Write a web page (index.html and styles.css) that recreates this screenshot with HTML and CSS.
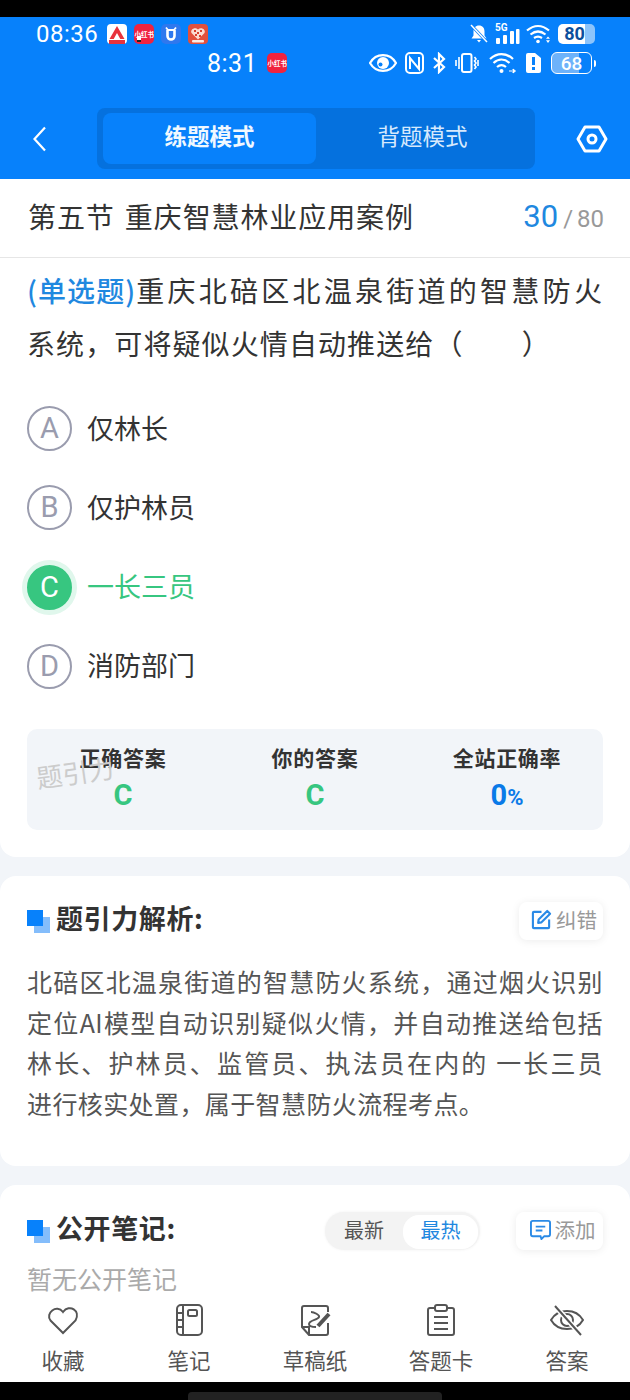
FILE: index.html
```html
<!DOCTYPE html>
<html lang="zh-CN">
<head>
<meta charset="utf-8">
<title>练题模式</title>
<link rel="stylesheet" href="styles.css">
</head>
<body>
<div class="page">
  <div class="black-top"></div>
  <header class="header">
    <div class="status-row row-one">
      <div class="status-left">
        <span class="time-one">08:36</span>
        <svg class="app" viewBox="0 0 20 20"><rect width="20" height="20" rx="4" fill="#fff"/><path d="M2.500 15 10 2l7.500 13h-4.200L10 9l-3.300 6z" fill="#e8323c"/><rect x="2" y="16" width="16" height="4" fill="#e8323c"/></svg>
        <span class="app red-app badge-app">小红书</span>
        <svg class="app" viewBox="0 0 20 20"><rect width="20" height="20" rx="5" fill="#2f78ee"/><path d="M6.500 6v6a3.500 3.500 0 0 0 7 0V6" fill="none" stroke="#fff" stroke-width="2.600"/><path d="M5 3.500 7 6h6l2-2.500" fill="none" stroke="#fff" stroke-width="1.800"/></svg>
        <svg class="app" viewBox="0 0 20 20"><rect width="20" height="20" rx="4" fill="#e2503c"/><path d="M10 15.500 3.500 9C1.800 5.500 7 2.500 10 5.500c3-3 8.200 0 6.500 3.500z" fill="#fbdcd2"/><path d="M6 6h2v2H6zM9 8h2v2H9zM12 6h2v2h-2zM7 10h2v2H7zM11 11h2v2h-2z" fill="#d9412f"/><rect x="4" y="16" width="12" height="2.500" rx="1" fill="#fbe9e2"/></svg>
      </div>
      <div class="status-right one-right">
        <svg class="ico-bell" viewBox="0 0 20 20"><path d="M10 1.500c3.500 0 5.500 2.500 5.500 6v4l2 3h-15l2-3v-4c0-3.500 2-6 5.500-6zM8 16h4l-2 2.500z" fill="#fff"/><path d="M2 1l16 17" stroke="#0781fb" stroke-width="3"/><path d="M2 1l16 17" stroke="#fff" stroke-width="1.500"/></svg>
        <svg class="ico-sig" viewBox="0 0 25 26"><text x="0" y="10" class="sig-text">5G</text><rect x="1" y="17" width="4" height="6" rx="1" fill="#fff"/><rect x="8" y="14" width="4" height="9" rx="1" fill="#fff"/><rect x="15" y="10" width="4" height="13" rx="1" fill="#fff"/><rect x="21" y="8" width="3.500" height="15" rx="1" fill="#fff"/></svg>
        <svg class="ico-wifi" viewBox="0 0 26 20"><path d="M1 6.500c7-6 15-6 22 0M4.500 10.500c5-4 10-4 15 0M8 14c3-2 5-2 8 0" fill="none" stroke="#fff" stroke-width="2.200"/><circle cx="12" cy="17.500" r="1.800" fill="#fff"/><path d="M22 12.500l2 2.200h-4zM22 19l2-2.800h-4z" fill="#fff"/></svg>
        <span class="batt-one"><span class="batt-one-num">80</span></span>
      </div>
    </div>
    <div class="status-row row-two">
      <div class="status-left left-two">
        <span class="time-two">8:31</span>
        <span class="app red-app">小红书</span>
      </div>
      <div class="status-right two-right">
        <svg class="ico-eye" viewBox="0 0 28 20"><path d="M1 10c6-10.500 20-10.500 26 0-6 10.500-20 10.500-26 0z" fill="none" stroke="#fff" stroke-width="2.200"/><circle cx="14" cy="10" r="6" fill="#fff"/><circle cx="11.500" cy="11.500" r="2" fill="#0781fb"/></svg>
        <svg class="ico-nfc" viewBox="0 0 19 22"><rect x="1" y="1" width="17" height="20" rx="4" fill="none" stroke="#fff" stroke-width="2"/><path d="M5 17V6l9 11V5" fill="none" stroke="#fff" stroke-width="2"/></svg>
        <svg class="ico-bt" viewBox="0 0 14 22"><path d="M2 6l10 9-5 5V2l5 5-10 9" fill="none" stroke="#fff" stroke-width="2.200"/></svg>
        <svg class="ico-vib" viewBox="0 0 25 22"><rect x="8" y="2" width="9.500" height="18" rx="2" fill="none" stroke="#fff" stroke-width="2"/><path d="M5 5v12M2 8v6M20.500 5l1.500 2-1.500 2 1.500 2-1.500 2 1.500 2-1.500 2M24 8v6" fill="none" stroke="#fff" stroke-width="1.600"/></svg>
        <svg class="ico-wifi2" viewBox="0 0 27 22"><path d="M1 7c7-6.500 16-6.500 23 0M4.500 11c5-4.500 11-4.500 16 0M8 15c3-2.500 6-2.500 9 0" fill="none" stroke="#fff" stroke-width="2.200"/><circle cx="12.500" cy="19" r="2" fill="#fff"/><path d="M20 19h3M24 17l2.500 2-2.500 2z" fill="#fff" stroke="#fff"/></svg>
        <svg class="ico-sim" viewBox="0 0 18 22"><path d="M4 1h7l6 5v13a2 2 0 0 1-2 2H4a2 2 0 0 1-2-2V3a2 2 0 0 1 2-2z" fill="#fff" transform="translate(-1)"/><rect x="7" y="5" width="3" height="8" fill="#0781fb"/><rect x="7" y="15" width="3" height="3" fill="#0781fb"/></svg>
        <span class="batt-two"><span class="batt-two-num">68</span></span>
        <span class="batt-tip"></span>
      </div>
    </div>
    <nav class="nav">
      <svg class="back" viewBox="0 0 13 26"><path d="M12 1.500 1.500 13 12 24.500" fill="none" stroke="#fff" stroke-width="2.200"/></svg>
      <div class="segments">
        <div class="segment active">练题模式</div>
        <div class="segment">背题模式</div>
      </div>
      <svg class="gear" viewBox="0 0 32 28"><path d="M9 2h14l7 12-7 12H9L2 14z" fill="none" stroke="#fff" stroke-width="3" stroke-linejoin="round"/><circle cx="16" cy="14" r="4" fill="none" stroke="#fff" stroke-width="3"/></svg>
    </nav>
  </header>

  <main class="main">
    <section class="card question-card">
      <div class="title-row">
        <h1 class="chapter">第五节 重庆智慧林业应用案例</h1>
        <div class="progress"><span class="progress-now">30</span><span class="progress-total">/ 80</span></div>
      </div>
      <p class="question"><span class="q-line"><span class="q-type">(单选题)</span>重庆北碚区北温泉街道的智慧防火</span><span class="q-line-two">系统，可将疑似火情自动推送给（&emsp;&emsp;）</span></p>
      <ul class="options">
        <li class="option"><span class="letter">A</span><span class="option-text">仅林长</span></li>
        <li class="option"><span class="letter">B</span><span class="option-text">仅护林员</span></li>
        <li class="option picked"><span class="letter">C</span><span class="option-text">一长三员</span></li>
        <li class="option"><span class="letter">D</span><span class="option-text">消防部门</span></li>
      </ul>
      <div class="stats">
        <span class="watermark">题引力</span>
        <div class="stat"><div class="stat-label">正确答案</div><div class="stat-value green">C</div></div>
        <div class="stat"><div class="stat-label">你的答案</div><div class="stat-value green">C</div></div>
        <div class="stat"><div class="stat-label">全站正确率</div><div class="stat-value blue">0<small class="pct">%</small></div></div>
      </div>
    </section>

    <section class="card analysis-card">
      <div class="section-head">
        <span class="squares"><i class="sq-back"></i><i class="sq-front"></i></span>
        <h2 class="section-title">题引力解析:</h2>
        <button class="mini-btn">
          <svg class="mini-ico" viewBox="0 0 22 22"><path d="M11 3H3a1 1 0 0 0-1 1v15a1 1 0 0 0 1 1h15a1 1 0 0 0 1-1v-8" fill="none" stroke="#2a8ae6" stroke-width="2.200"/><path d="M8 11 17 2l3 3-9 9-3.500.500z" fill="none" stroke="#2a8ae6" stroke-width="2.200" stroke-linejoin="round"/></svg>纠错
        </button>
      </div>
      <p class="analysis">北碚区北温泉街道的智慧防火系统，通过烟火识别定位AI模型自动识别疑似火情，并自动推送给包括林长、护林员、监管员、执法员在内的 一长三员<span class="analysis-end">进行核实处置，属于智慧防火流程考点。</span></p>
    </section>

    <section class="card notes-card">
      <div class="section-head">
        <span class="squares"><i class="sq-back"></i><i class="sq-front"></i></span>
        <h2 class="section-title">公开笔记:</h2>
        <div class="toggle"><span class="toggle-item">最新</span><span class="toggle-item on">最热</span></div>
        <button class="mini-btn wide">
          <svg class="mini-ico" viewBox="0 0 22 22"><path d="M3 2h16a2 2 0 0 1 2 2v12a2 2 0 0 1-2 2h-4l-3 3-1-3H3a2 2 0 0 1-2-2V4a2 2 0 0 1 2-2z" fill="none" stroke="#2a8ae6" stroke-width="2"/><path d="M6 8h10M6 12h7" stroke="#2a8ae6" stroke-width="2"/></svg>添加
        </button>
      </div>
      <p class="empty">暂无公开笔记</p>
    </section>
  </main>

  <footer class="tabs">
    <div class="tab">
      <svg class="tab-ico" viewBox="0 0 34 34"><path d="M17 30 4.500 17.500C-1 10.500 10.500 .500 17 9c6.500-8.500 18-1.500 12.500 8.500z" fill="none" stroke="#555" stroke-width="2"/></svg>
      <span>收藏</span>
    </div>
    <div class="tab">
      <svg class="tab-ico" viewBox="0 0 34 34"><rect x="5" y="2" width="25" height="30" rx="4" fill="none" stroke="#555" stroke-width="2"/><path d="M11 2v30M5 10h6M5 17h6M5 24h6" fill="none" stroke="#555" stroke-width="2"/><rect x="16" y="7" width="9" height="6" rx="1.500" fill="none" stroke="#555" stroke-width="2"/></svg>
      <span>笔记</span>
    </div>
    <div class="tab">
      <svg class="tab-ico" viewBox="0 0 34 34"><path d="M30 9V5a2 2 0 0 0-2-2H6a2 2 0 0 0-2 2v19l7 8h17a2 2 0 0 0 2-2V20" fill="none" stroke="#555" stroke-width="2"/><path d="M4 24h7v8" fill="none" stroke="#555" stroke-width="2"/><path d="M13 9c3 0 9 3 8 5-1 3-10 3-10 7 0 3 5 3 7 3" fill="none" stroke="#555" stroke-width="2"/><path d="M20 23 31 11" stroke="#555" stroke-width="4"/></svg>
      <span>草稿纸</span>
    </div>
    <div class="tab">
      <svg class="tab-ico" viewBox="0 0 34 34"><path d="M10 5H6a2 2 0 0 0-2 2v23a2 2 0 0 0 2 2h22a2 2 0 0 0 2-2V7a2 2 0 0 0-2-2h-4" fill="none" stroke="#555" stroke-width="2"/><rect x="11" y="2" width="12" height="6" rx="2" fill="none" stroke="#555" stroke-width="2"/><path d="M10 14h14M10 20h14M10 26h14" stroke="#555" stroke-width="2"/></svg>
      <span>答题卡</span>
    </div>
    <div class="tab">
      <svg class="tab-ico" viewBox="0 0 34 34"><path d="M1 17C8 5 26 5 33 17 26 29 8 29 1 17z" fill="none" stroke="#555" stroke-width="2"/><circle cx="17" cy="17" r="6" fill="none" stroke="#555" stroke-width="2"/><path d="M5 3 31 32" stroke="#fff" stroke-width="5"/><path d="M5 3 31 32" stroke="#555" stroke-width="2"/></svg>
      <span>答案</span>
    </div>
  </footer>
  <div class="black-bottom"><span class="home-bar"></span></div>
</div>
</body>
</html>
```

FILE: styles.css
```css
* { box-sizing: border-box; }
html, body { margin: 0; padding: 0; }
body {
  width: 630px;
  height: 1400px;
  overflow: hidden;
  background: #f2f5f9;
  font-family: "Noto Sans CJK SC", "Roboto", sans-serif;
  color: #333;
}
h1, h2, p, ul { margin: 0; padding: 0; }
.page { display: flex; flex-direction: column; height: 1400px; }
.black-top { height: 17px; background: #000; flex: none; }

.header { height: 162px; flex: none; background: #0781fb; color: #fff; display: flex; flex-direction: column; }
.status-row { display: flex; align-items: center; justify-content: space-between; }
.row-one { height: 31px; padding: 3px 35px 0 36px; }
.row-two { height: 29px; padding: 1px 34px 0 207px; }
.status-left, .status-right { display: flex; align-items: center; }
.status-left { gap: 7px; }
.time-one { font: 400 24px/1 "Roboto", sans-serif; letter-spacing: .5px; margin-right: 2px; }
.time-two { font: 400 25px/1 "Roboto", sans-serif; margin-right: 3px; letter-spacing: .5px; }
.app { width: 20px; height: 20px; flex: none; display: block; }
.red-app { background: #f0233f; border-radius: 5px; color: #fff; font-size: 6.500px; font-weight: 700; line-height: 20px; text-align: center; white-space: nowrap; overflow: hidden; }
.badge-app { position: relative; }
.badge-app::after { content: ""; position: absolute; left: 3px; bottom: 2px; width: 4px; height: 4px; background: #fff; border-bottom: 2px solid #222; }
.one-right { gap: 6px; }
.ico-bell { width: 20px; height: 20px; }
.ico-sig { width: 25px; height: 26px; }
.sig-text { font: 700 10px "Roboto", sans-serif; fill: #fff; }
.ico-wifi { width: 26px; height: 20px; }
.batt-one { width: 37px; height: 20px; background: linear-gradient(90deg, #fff 0 74%, #8cc4fb 74% 100%); border-radius: 5px; display: flex; align-items: center; }
.batt-one-num { width: 30px; text-align: center; color: #0c4f9c; font: 700 18px/1 "Roboto", sans-serif; padding-left: 3px; }
.two-right { gap: 8px; }
.ico-eye { width: 28px; height: 20px; }
.ico-nfc { width: 19px; height: 22px; }
.ico-bt { width: 14px; height: 22px; }
.ico-vib { width: 25px; height: 22px; }
.ico-wifi2 { width: 27px; height: 22px; margin-left: 2px; }
.ico-sim { width: 18px; height: 22px; margin-left: 1px; }
.batt-two { width: 41px; height: 22px; border: 1.500px solid #fff; border-radius: 6px; display: flex; align-items: center; justify-content: center; background: linear-gradient(90deg, #6db2fa 0 68%, transparent 68%); }
.batt-two-num { font: 500 19px/1 "Roboto", sans-serif; color: #fff; }
.batt-tip { width: 2px; height: 7px; background: #fff; border-radius: 0 2px 2px 0; margin-left: -6px; }

.nav { display: flex; align-items: center; padding: 0 22px 0 33px; margin-top: 31px; }
.back { width: 13px; height: 26px; flex: none; }
.segments { width: 438px; height: 61px; margin-left: 51px; padding: 5px 6px; display: grid; grid-template-columns: 213px 1fr; background: #0571de; border-radius: 8px; }
.segment { display: flex; align-items: center; justify-content: center; padding-bottom: 7px; font-size: 22.500px; color: #d6e9fd; border-radius: 8px; }
.segment.active { background: #0781fb; color: #f0f8ff; font-weight: 700; }
.gear { width: 32px; height: 28px; margin-left: auto; flex: none; }

.main { flex: 1; min-height: 0; overflow: hidden; display: flex; flex-direction: column; gap: 19px; }
.card { background: #fff; border-radius: 16px; flex: none; padding: 0 27px; }

.question-card { border-radius: 0 0 16px 16px; height: 678px; }
.title-row { height: 79px; margin: 0 -27px; padding: 0 26px 4px 28px; border-bottom: 1px solid #e6e6e6; display: flex; align-items: center; justify-content: space-between; }
.chapter { font-size: 28px; font-weight: 400; color: #333; letter-spacing: .9px; word-spacing: 3px; white-space: nowrap; }
.progress { display: flex; align-items: baseline; gap: 5px; }
.progress-now { font: 400 31px/1 "Roboto", sans-serif; color: #1f88e0; }
.progress-total { font: 400 24px/1 "Roboto", sans-serif; color: #999; word-spacing: -2px; }
.question { font-size: 28px; line-height: 53px; letter-spacing: 1.100px; color: #333; margin-top: 6px; }
.q-line { display: block; text-align: justify; text-align-last: justify; white-space: nowrap; }
.q-line-two { display: block; white-space: nowrap; }
.q-type { color: #1f88e0; letter-spacing: -1.100px; font-weight: 500; }

.options { list-style: none; margin-top: 36px; display: flex; flex-direction: column; gap: 34.300px; }
.option { display: flex; align-items: center; height: 45px; gap: 15px; font-size: 27px; color: #333; }
.option-text { padding-bottom: 3px; }
.letter { width: 45px; height: 45px; border-radius: 50%; border: 2px solid #9a9cae; color: #9a9cae; display: flex; align-items: center; justify-content: center; font: 400 29px/1 "Roboto", sans-serif; flex: none; }
.picked { color: #37c680; }
.picked .letter { background: #37c680; border-color: #37c680; color: #fff; box-shadow: 0 0 0 5px #e0f7ec; }

.stats { position: relative; height: 101px; margin-top: 40px; background: #f2f5f9; border-radius: 10px; display: grid; grid-template-columns: repeat(3, 1fr); padding-top: 12px; }
.watermark { position: absolute; left: 9px; top: 30px; font-size: 26px; color: #ccc; transform: rotate(-8deg); white-space: nowrap; line-height: 1; }
.stat { text-align: center; }
.stat-label { font-size: 21px; font-weight: 700; line-height: 32px; color: #333; letter-spacing: .7px; }
.stat-value { font: 700 29px/36px "Roboto", sans-serif; margin-top: 4px; }
.green { color: #37c680; }
.blue { color: #0a7ae8; }
.pct { font-size: 22px; }

.analysis-card { height: 290px; padding-top: 26px; }
.notes-card { flex: 1; padding-top: 27px; border-radius: 16px 16px 0 0; }
.section-head { display: flex; align-items: center; height: 38px; }
.squares { position: relative; width: 23px; height: 23px; flex: none; margin-right: 6px; }
.squares i { position: absolute; width: 16px; height: 16px; display: block; }
.sq-back { right: 0; bottom: 0; background: #84bdfb; }
.sq-front { left: 0; top: 0; background: #0781fb; }
.section-title { font-size: 27px; font-weight: 700; color: #333; letter-spacing: .6px; flex: 1; white-space: nowrap; padding-bottom: 7px; }
.mini-btn { height: 38px; width: 84px; flex: none; border: 0; background: #fff; border-radius: 8px; box-shadow: 0 1px 8px rgba(0,0,0,.08); color: #999; font: 400 20.500px/1 "Noto Sans CJK SC", sans-serif; display: flex; align-items: center; justify-content: center; gap: 4px; padding: 0 0 4px 6px; }
.mini-btn.wide { width: 87px; }
.mini-ico { width: 21px; height: 21px; flex: none; }
.analysis { margin-top: 21px; font-size: 25px; line-height: 40.600px; letter-spacing: .4px; color: #555; text-align: justify; text-align-last: justify; }
.analysis-end { display: block; text-align-last: left; }

.toggle { display: grid; grid-template-columns: 78px 75px; width: 155px; height: 38px; margin-right: 36px; padding: 3px 2px 3px 0; border-radius: 19px; background: #f3f3f3; flex: none; box-shadow: 0 0 3px rgba(0,0,0,.06); }
.toggle-item { display: flex; align-items: center; justify-content: center; font-size: 20px; color: #555; border-radius: 16px; padding-bottom: 5px; }
.toggle-item.on { background: #fff; color: #1f88e0; }
.empty { margin-top: 10px; font-size: 25px; line-height: 36px; color: #aaa; }

.tabs { height: 85px; flex: none; background: #fff; display: grid; grid-template-columns: repeat(5, 1fr); margin-top: -4px; position: relative; }
.tab { display: flex; flex-direction: column; align-items: center; padding-top: 6px; font-size: 21.500px; line-height: 30px; color: #555; }
.tab-ico { width: 34px; height: 34px; margin-bottom: 8px; flex: none; }
.black-bottom { height: 18px; flex: none; background: #000; display: flex; justify-content: center; align-items: flex-end; }
.home-bar { width: 254px; height: 8px; background: #222; border-radius: 4px 4px 0 0; }
```
